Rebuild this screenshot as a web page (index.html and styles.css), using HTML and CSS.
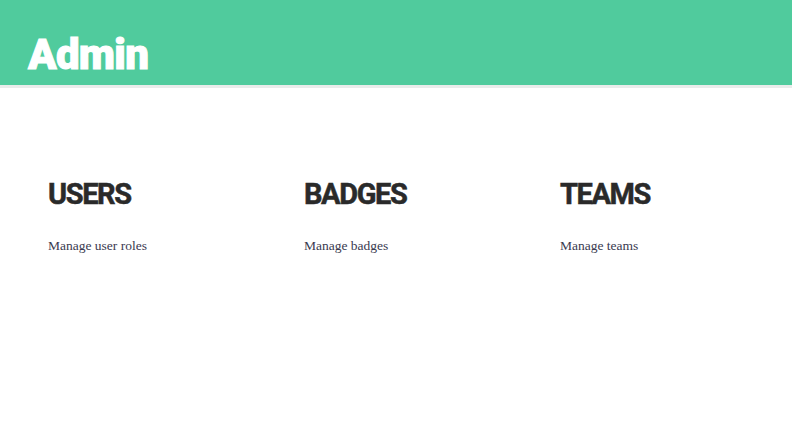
FILE: index.html
```html
<!DOCTYPE html>
<html>
<head>
<meta charset="utf-8">
<link rel="stylesheet" href="styles.css">
</head>
<body>
<header class="header">
  <h1 class="title">Admin</h1>
</header>
<main class="sections">
  <section class="card">
    <h2 class="card-title">USERS</h2>
    <p class="card-text">Manage user roles</p>
  </section>
  <section class="card">
    <h2 class="card-title">BADGES</h2>
    <p class="card-text">Manage badges</p>
  </section>
  <section class="card">
    <h2 class="card-title">TEAMS</h2>
    <p class="card-text">Manage teams</p>
  </section>
</main>
</body>
</html>
```
FILE: styles.css
```css
html, body {
  margin: 0;
  padding: 0;
  background: #ffffff;
  overflow: hidden;
}
.header {
  box-sizing: border-box;
  background: #50cb9d;
  height: 88px;
  border-bottom: 3px solid #e9eceb;
  padding: 34px 28px 0;
  display: flex;
  align-items: flex-start;
}
.title {
  margin: 0;
  font-family: Roboto, sans-serif;
  font-weight: 900;
  font-size: 42px;
  letter-spacing: -0.7px;
  -webkit-text-stroke: 1px #ffffff;
  color: #ffffff;
  line-height: 42px;
}
.sections {
  display: grid;
  grid-template-columns: 256px 256px 1fr;
  padding: 90px 0 0 48px;
}
.card-title {
  margin: 0;
  font-family: Roboto, sans-serif;
  font-weight: 700;
  font-size: 29px;
  letter-spacing: -1.4px;
  -webkit-text-stroke: 0.5px #2a2a2a;
  line-height: 32px;
  color: #2a2a2a;
}
.card-text {
  margin: 28px 0 0;
  font-family: "Liberation Serif", serif;
  font-size: 13.5px;
  line-height: 15px;
  color: #3a3a50;
}
```
